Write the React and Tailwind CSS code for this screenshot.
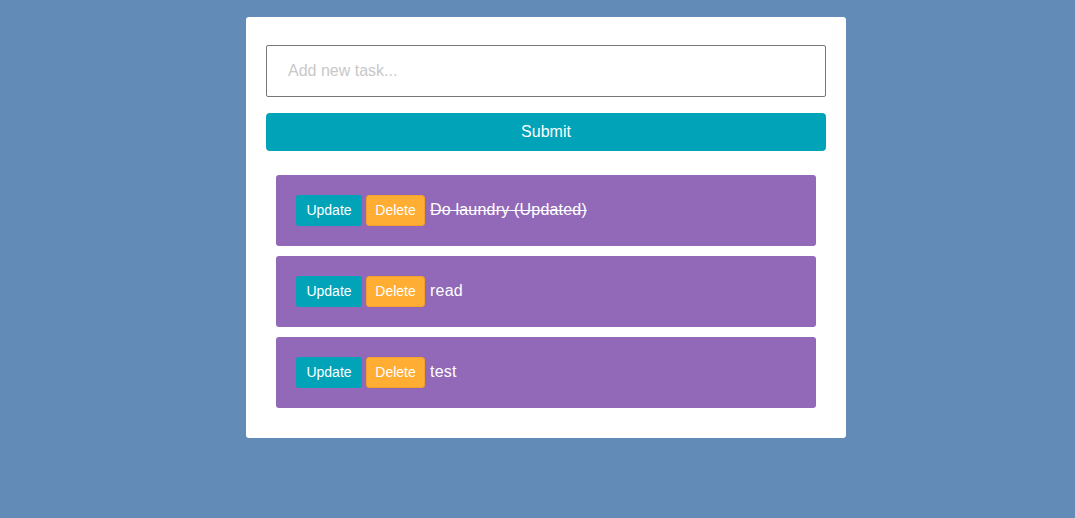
import React from "react";

const tasks = [
  { id: 1, text: "Do laundry (Updated)", done: true },
  { id: 2, text: "read", done: false },
  { id: 3, text: "test", done: false },
];

function TaskItem({ task }) {
  return (
    <div className="flex items-center bg-[#9169b8] rounded-[3px] px-5 py-5 h-[71px]">
      <button className="h-[31px] w-[66px] bg-[#01a3b9] text-white text-[14px] rounded-[3px]">
        Update
      </button>
      <button className="h-[31px] w-[59px] ml-1 bg-[#ffad33] border border-[#f2a02a] text-white text-[14px] rounded-[3px]">
        Delete
      </button>
      <span
        className={
          "ml-[5px] -mt-[2px] text-white text-[16px] tracking-[0.2px] " +
          (task.done ? "line-through" : "")
        }
      >
        {task.text}
      </span>
    </div>
  );
}

export default function App() {
  return (
    <div className="min-h-[518px] bg-[#628bb8] pt-[17px] pl-[17px] font-['Liberation_Sans',Arial,sans-serif]">
      <div className="w-[600px] mx-auto bg-white rounded-[3px] px-5 pt-[28px] pb-[30px]">
        <input
          type="text"
          placeholder="Add new task..."
          className="w-full h-[52px] border border-[#777] rounded-[2px] px-[21px] text-[16px] placeholder:text-[#c8c8c8] outline-none"
        />
        <button className="w-full h-[38px] mt-4 bg-[#01a3b9] text-white text-[16px] rounded-[4px]">
          Submit
        </button>
        <div className="mt-6 px-[10px] flex flex-col gap-[10px]">
          {tasks.map((t) => (
            <TaskItem key={t.id} task={t} />
          ))}
        </div>
      </div>
    </div>
  );
}
